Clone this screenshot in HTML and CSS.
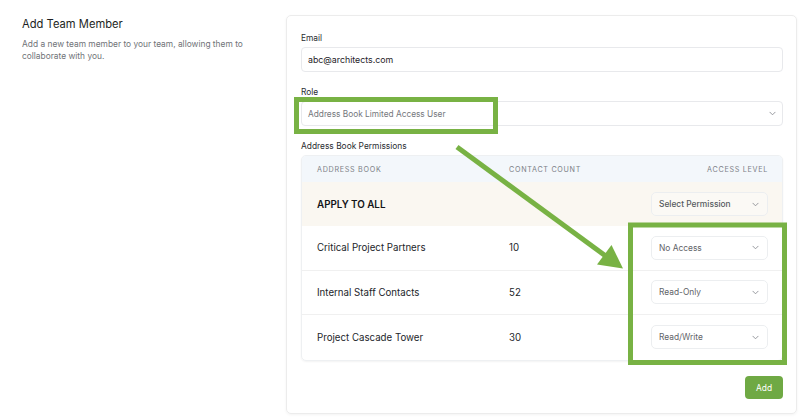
FILE: index.html
```html
<!DOCTYPE html>
<html>
<head>
<meta charset="utf-8">
<link rel="stylesheet" href="styles.css">
</head>
<body>
<div class="page">
  <aside class="intro">
    <h1 class="title">Add Team Member</h1>
    <p class="desc">Add a new team member to your team, allowing them to collaborate with you.</p>
  </aside>
  <main class="card">
    <div class="field">
      <div class="label">Email</div>
      <div class="input">abc@architects.com</div>
    </div>
    <div class="field">
      <div class="label">Role</div>
      <div class="input select muted"><span>Address Book Limited Access User</span>
        <svg class="chev" viewBox="0 0 8 5"><path d="M1 1l3 3 3-3" fill="none" stroke="currentColor" stroke-width="1" stroke-linecap="round" stroke-linejoin="round"/></svg>
      </div>
    </div>
    <div class="field">
      <div class="label">Address Book Permissions</div>
      <div class="table">
        <div class="row head">
          <div>Address Book</div>
          <div>Contact Count</div>
          <div class="right">Access Level</div>
        </div>
        <div class="row apply">
          <div class="strong">APPLY TO ALL</div>
          <div></div>
          <div class="right"><div class="perm bold"><span>Select Permission</span><svg class="chev" viewBox="0 0 8 5"><path d="M1 1l3 3 3-3" fill="none" stroke="currentColor" stroke-width="1" stroke-linecap="round" stroke-linejoin="round"/></svg></div></div>
        </div>
        <div class="row">
          <div>Critical Project Partners</div>
          <div>10</div>
          <div class="right"><div class="perm"><span>No Access</span><svg class="chev" viewBox="0 0 8 5"><path d="M1 1l3 3 3-3" fill="none" stroke="currentColor" stroke-width="1" stroke-linecap="round" stroke-linejoin="round"/></svg></div></div>
        </div>
        <div class="row">
          <div>Internal Staff Contacts</div>
          <div>52</div>
          <div class="right"><div class="perm"><span>Read-Only</span><svg class="chev" viewBox="0 0 8 5"><path d="M1 1l3 3 3-3" fill="none" stroke="currentColor" stroke-width="1" stroke-linecap="round" stroke-linejoin="round"/></svg></div></div>
        </div>
        <div class="row last">
          <div>Project Cascade Tower</div>
          <div>30</div>
          <div class="right"><div class="perm"><span>Read/Write</span><svg class="chev" viewBox="0 0 8 5"><path d="M1 1l3 3 3-3" fill="none" stroke="currentColor" stroke-width="1" stroke-linecap="round" stroke-linejoin="round"/></svg></div></div>
        </div>
      </div>
    </div>
    <div class="actions"><button class="btn">Add</button></div>
  </main>
</div>
<svg class="annot" viewBox="0 0 800 419" width="800" height="419">
  <rect x="296.5" y="99.5" width="199" height="32" fill="none" stroke="#78b244" stroke-width="5"/>
  <rect x="630.5" y="225" width="154" height="137.5" fill="none" stroke="#78b244" stroke-width="5"/>
  <line x1="457" y1="147" x2="605" y2="255.5" stroke="#78b244" stroke-width="5"/>
  <polygon points="623,268.5 597,264.5 611.5,245" fill="#78b244"/>
</svg>
</body>
</html>
```
FILE: styles.css
```css
* { box-sizing: border-box; }
html, body { margin: 0; padding: 0; background: #fff; }
body {
  font-family: Inter, "Liberation Sans", sans-serif;
  color: #1f2328;
  width: 800px;
  height: 419px;
  overflow: hidden;
  position: relative;
}
.page {
  display: flex;
  align-items: flex-start;
  height: 419px;
}
.intro {
  width: 286px;
  padding: 17px 0 0 22px;
}
.title {
  margin: 0;
  font-size: 11.2px;
  line-height: 14px;
  font-weight: 400;
  color: #1d1f23;
}
.desc {
  margin: 7px 0 0;
  font-size: 8.4px;
  line-height: 12px;
  color: #707378;
  max-width: 238px;
}
.card {
  margin-top: 15px;
  width: 511px;
  height: 399px;
  border: 1px solid #ececec;
  border-radius: 5px;
  box-shadow: 0 1px 3px rgba(0,0,0,0.05);
  padding: 16px 13px 14px 14px;
  display: flex;
  flex-direction: column;
}
.field { margin-bottom: 14px; }
.label {
  font-size: 8.4px;
  line-height: 13px;
  color: #2a2d31;
  margin-bottom: 2px;
}
.input {
  height: 25px;
  border: 1px solid #e8e9ec;
  border-radius: 4px;
  padding: 0 6px;
  display: flex;
  align-items: center;
  font-size: 8.8px;
  color: #1f2328;
}
.select { justify-content: space-between; }
.muted { color: #74777c; font-size: 8.3px; }
.chev {
  width: 7px;
  height: 5px;
  color: #8a8d92;
  flex: none;
}
.table {
  border: 1px solid #eef0f2;
  border-radius: 5px;
  overflow: hidden;
  box-shadow: 0 1px 2px rgba(0,0,0,0.05);
}
.row {
  display: grid;
  grid-template-columns: 192px 1fr 160px;
  align-items: center;
  height: 44.5px;
  padding: 0 14px 0 15px;
  border-bottom: 1px solid #f0f0f0;
  font-size: 9.7px;
  color: #22252a;
}
.row.last { border-bottom: none; }
.row.head {
  height: 26px;
  background: #f3f7fb;
  font-size: 7.2px;
  letter-spacing: 0.7px;
  text-transform: uppercase;
  color: #7d8187;
  border-bottom: none;
}
.row.apply {
  height: 44px;
  background: #faf7f1;
  border-bottom: none;
}
.strong { font-weight: 600; color: #121417; font-size: 9.8px; }
.right { display: flex; justify-content: flex-end; }
.perm {
  width: 117px;
  height: 24px;
  border: 1px solid #eceef0;
  border-radius: 5px;
  background: #fff;
  padding: 0 8px 0 7px;
  display: flex;
  align-items: center;
  justify-content: space-between;
  font-size: 8.4px;
  color: #5f6368;
}
.row.apply .perm { background: #fbf9f5; }
.perm.bold { font-weight: 500; color: #55595e; }
.actions {
  margin-top: auto;
  display: flex;
  justify-content: flex-end;
}
.btn {
  width: 38px;
  height: 23px;
  border: none;
  border-radius: 4px;
  background: #6fa944;
  color: #fff;
  font-family: inherit;
  font-size: 8.4px;
  padding: 0;
}
.annot {
  position: absolute;
  left: 0;
  top: 0;
  pointer-events: none;
}
```
